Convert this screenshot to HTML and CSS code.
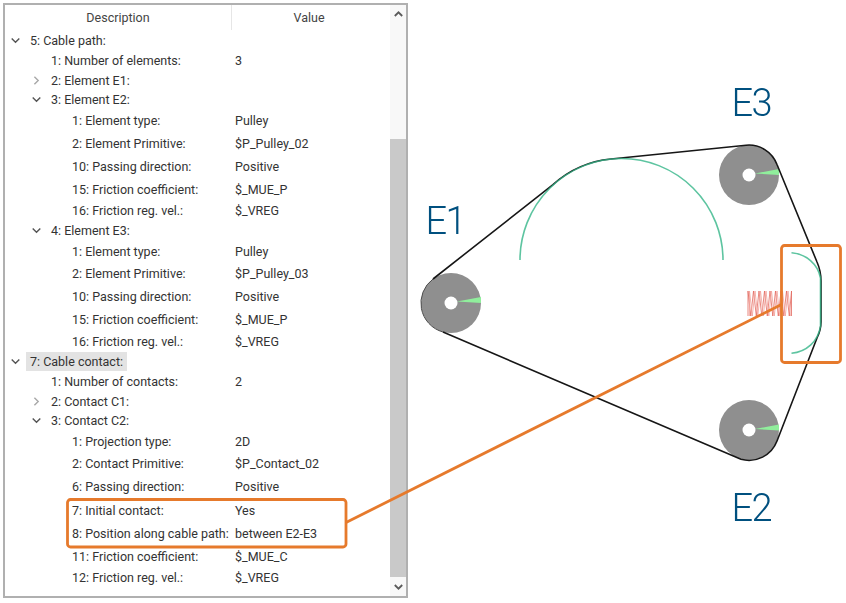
FILE: index.html
```html
<!DOCTYPE html>
<html lang="en">
<head>
<meta charset="utf-8">
<title>Cable contact</title>
<link rel="stylesheet" href="styles.css">
</head>
<body>
<svg class="defs" width="0" height="0" aria-hidden="true">
  <symbol id="down" viewBox="0 0 9 6"><path d="M0.7 0.9 L4.5 4.7 L8.3 0.9" fill="none" stroke="currentColor" stroke-width="1.4"/></symbol>
  <symbol id="right" viewBox="0 0 6 9"><path d="M0.9 0.7 L4.7 4.5 L0.9 8.3" fill="none" stroke="currentColor" stroke-width="1.4"/></symbol>
</svg>
<main class="app">
  <section class="panel">
    <div class="tree">
      <div class="head"><div class="head-cell">Description</div><div class="head-cell">Value</div></div>
      <div class="row h20 d0"><span class="name"><svg class="chev open"><use href="#down"/></svg><span>5: Cable path:</span></span></div>
      <div class="row h20 d1"><span class="name"><i class="gap"></i><span>1: Number of elements:</span></span><span class="val">3</span></div>
      <div class="row h20 d1"><span class="name"><svg class="chev shut"><use href="#right"/></svg><span>2: Element E1:</span></span></div>
      <div class="row h19 d1"><span class="name"><svg class="chev open"><use href="#down"/></svg><span>3: Element E2:</span></span></div>
      <div class="row h23 d2"><span class="name"><i class="gap"></i><span>1: Element type:</span></span><span class="val">Pulley</span></div>
      <div class="row h23 d2"><span class="name"><i class="gap"></i><span>2: Element Primitive:</span></span><span class="val">$P_Pulley_02</span></div>
      <div class="row h23 d2"><span class="name"><i class="gap"></i><span>10: Passing direction:</span></span><span class="val">Positive</span></div>
      <div class="row h22 d2"><span class="name"><i class="gap"></i><span>15: Friction coefficient:</span></span><span class="val">$_MUE_P</span></div>
      <div class="row h21 d2"><span class="name"><i class="gap"></i><span>16: Friction reg. vel.:</span></span><span class="val">$_VREG</span></div>
      <div class="row h19 d1"><span class="name"><svg class="chev open"><use href="#down"/></svg><span>4: Element E3:</span></span></div>
      <div class="row h22 d2"><span class="name"><i class="gap"></i><span>1: Element type:</span></span><span class="val">Pulley</span></div>
      <div class="row h23 d2"><span class="name"><i class="gap"></i><span>2: Element Primitive:</span></span><span class="val">$P_Pulley_03</span></div>
      <div class="row h23 d2"><span class="name"><i class="gap"></i><span>10: Passing direction:</span></span><span class="val">Positive</span></div>
      <div class="row h23 d2"><span class="name"><i class="gap"></i><span>15: Friction coefficient:</span></span><span class="val">$_MUE_P</span></div>
      <div class="row h21 d2"><span class="name"><i class="gap"></i><span>16: Friction reg. vel.:</span></span><span class="val">$_VREG</span></div>
      <div class="row h19 d0"><span class="name"><svg class="chev open"><use href="#down"/></svg><span class="selected">7: Cable contact:</span></span></div>
      <div class="row h20 d1"><span class="name"><i class="gap"></i><span>1: Number of contacts:</span></span><span class="val">2</span></div>
      <div class="row h20 d1"><span class="name"><svg class="chev shut"><use href="#right"/></svg><span>2: Contact C1:</span></span></div>
      <div class="row h19 d1"><span class="name"><svg class="chev open"><use href="#down"/></svg><span>3: Contact C2:</span></span></div>
      <div class="row h22 d2"><span class="name"><i class="gap"></i><span>1: Projection type:</span></span><span class="val">2D</span></div>
      <div class="row h23 d2"><span class="name"><i class="gap"></i><span>2: Contact Primitive:</span></span><span class="val">$P_Contact_02</span></div>
      <div class="row h23 d2"><span class="name"><i class="gap"></i><span>6: Passing direction:</span></span><span class="val">Positive</span></div>
      <div class="row h24 d2"><span class="name"><i class="gap"></i><span>7: Initial contact:</span></span><span class="val">Yes</span></div>
      <div class="row h23 d2"><span class="name"><i class="gap"></i><span>8: Position along cable path:</span></span><span class="val">between E2-E3</span></div>
      <div class="row h22 d2"><span class="name"><i class="gap"></i><span>11: Friction coefficient:</span></span><span class="val">$_MUE_C</span></div>
      <div class="row h21 d2"><span class="name"><i class="gap"></i><span>12: Friction reg. vel.:</span></span><span class="val">$_VREG</span></div>
    </div>
    <div class="scrollbar">
      <div class="scroll-btn"><svg class="scroll-arrow" viewBox="0 0 9 6"><path d="M0.8 5 L4.5 1.3 L8.2 5" fill="none" stroke="currentColor" stroke-width="1.8"/></svg></div>
      <div class="scroll-track"></div>
      <div class="scroll-thumb"></div>
      <div class="scroll-btn"><svg class="scroll-arrow" viewBox="0 0 9 6"><path d="M0.8 1 L4.5 4.7 L8.2 1" fill="none" stroke="currentColor" stroke-width="1.8"/></svg></div>
    </div>
  </section>

  <svg class="diagram" viewBox="410 0 436 603" width="436" height="603">
    <g class="pulley"><circle cx="451" cy="303" r="30"/><path class="wedge" d="M457 301.500 L481 297 L481 303 Z"/><circle class="hole" cx="451" cy="303" r="6.5"/></g>
    <g class="pulley"><circle cx="749" cy="175" r="30"/><path class="wedge" d="M755 173.500 L779 169 L779 175 Z"/><circle class="hole" cx="749" cy="175" r="6.5"/></g>
    <g class="pulley"><circle cx="749" cy="430" r="30"/><path class="wedge" d="M755 429 L779 424.500 L779 430.500 Z"/><circle class="hole" cx="749" cy="430" r="6.5"/></g>

    <path class="belt" d="M433 279 L553 184.600 A101.500 101.500 0 0 1 611 159 L746 145.200 A30 30 0 0 1 777 164.500 L817 262 Q821 271 821 281 L821 322 Q821 330 817 338 L777 441 A30 30 0 0 1 741 459.300 L443 332"/>
    <path class="belt-wrap" d="M443 332 A30 30 0 0 1 433 279"/>

    <path class="guide" d="M520 260 A101.500 101.500 0 0 1 723 260"/>
    <path class="guide" d="M791.500 252.700 C806 254 818 264 820.500 278 L820.500 326 C818 342 806 352 791.500 353.300"/>

    <path class="spring" d="M748 316 L748 291 L750.800 316 L753.500 291 L756.300 316 L759 291 L761.800 316 L764.500 291 L767.300 316 L770 291 L772.800 316 L775.500 291 L778.300 316 L781 291 L783.800 316 L786.500 291 L789.300 316 L791.500 291 L791.500 316"/>
    <path class="spring spring-back" d="M749.500 316 L749.500 291 L752.300 316 L755 291 L757.800 316 L760.500 291 L763.300 316 L766 291 L768.800 316 L771.500 291 L774.300 316 L777 291 L779.800 316 L782.500 291 L785.300 316 L788 291 L790.500 316"/>

    <text class="label" x="425.500" y="234">E1</text>
    <text class="label" x="731.500" y="116">E3</text>
    <text class="label" x="731.500" y="521">E2</text>
  </svg>

  <svg class="callout" viewBox="0 0 846 603" width="846" height="603" aria-hidden="true">
    <rect x="67.500" y="499.500" width="278.500" height="47.500" rx="3"/>
    <path d="M346 522.500 L781.500 304.500"/>
    <rect x="781.500" y="245.500" width="59" height="117" rx="3"/>
  </svg>
</main>
</body>
</html>
```

FILE: styles.css
```css
* { box-sizing: border-box; }
html, body { margin: 0; padding: 0; background: #fff; }
body { font-family: "Roboto", "Open Sans", sans-serif; font-size: 12.5px; color: #333; overflow: hidden; }
.defs { position: absolute; }

.app { position: relative; width: 846px; height: 603px; display: flex; align-items: flex-start; filter: blur(0.35px); }

.panel {
  flex: none;
  width: 405px;
  height: 595px;
  margin: 3px 0 0 3px;
  border: 2px solid #b0b0b0;
  display: flex;
  background: #fff;
}
.tree { flex: 1; min-width: 0; }
.head { height: 25px; display: grid; grid-template-columns: 226px 1fr; }
.head-cell { display: flex; align-items: center; justify-content: center; color: #444; }
.head-cell + .head-cell { border-left: 1px solid #e6e6e6; padding-right: 4px; }

.row { display: grid; grid-template-columns: 230px 1fr; align-items: center; white-space: nowrap; }
.h19 { height: 19px; } .h20 { height: 20px; } .h21 { height: 21px; }
.h22 { height: 22px; } .h23 { height: 23px; } .h24 { height: 24px; }
.name { display: flex; align-items: center; }
.d0 .name { padding-left: 6px; }
.d1 .name { padding-left: 27px; }
.d2 .name { padding-left: 48px; }
.chev, .gap { flex: none; display: block; width: 9px; height: 9px; margin-right: 10px; }
.chev.open { color: #555; }
.chev.shut { color: #a8a8a8; }
.selected { background: #e3e3e3; padding: 2px 4px; margin: 0 -4px; }

.scrollbar { flex: none; width: 16px; display: flex; flex-direction: column; background: #f8f8f8; }
.scroll-btn { flex: none; height: 18px; display: flex; align-items: center; justify-content: center; color: #5a5a5a; }
.scroll-arrow { width: 9px; height: 6px; }
.scroll-track { flex: 1; }
.scroll-thumb { flex: none; height: 438px; background: #c9c9c9; margin-bottom: 1px; }

.diagram { flex: none; margin-left: 2px; display: block; }
.pulley circle { fill: #8f8f8f; }
.pulley .hole { fill: #fff; }
.wedge { fill: #90ee9c; }
.guide { fill: none; stroke: #35b588; stroke-width: 1.600; opacity: 0.8; }
.belt { fill: none; stroke: #161616; stroke-width: 1.600; stroke-linejoin: round; }
.belt-wrap { fill: none; stroke: #4a4a4a; stroke-width: 1; }
.spring { fill: none; stroke: #e2685e; stroke-width: 0.800; }
.spring-back { stroke: #f2a29b; }
.label { font-family: "Roboto", "Liberation Sans", sans-serif; font-weight: 300; font-size: 38px; fill: #00507f; letter-spacing: -1.500px; }

.callout { position: absolute; left: 0; top: 0; pointer-events: none; }
.callout rect, .callout path { fill: none; stroke: #e67a2c; stroke-width: 2.800; }
```
